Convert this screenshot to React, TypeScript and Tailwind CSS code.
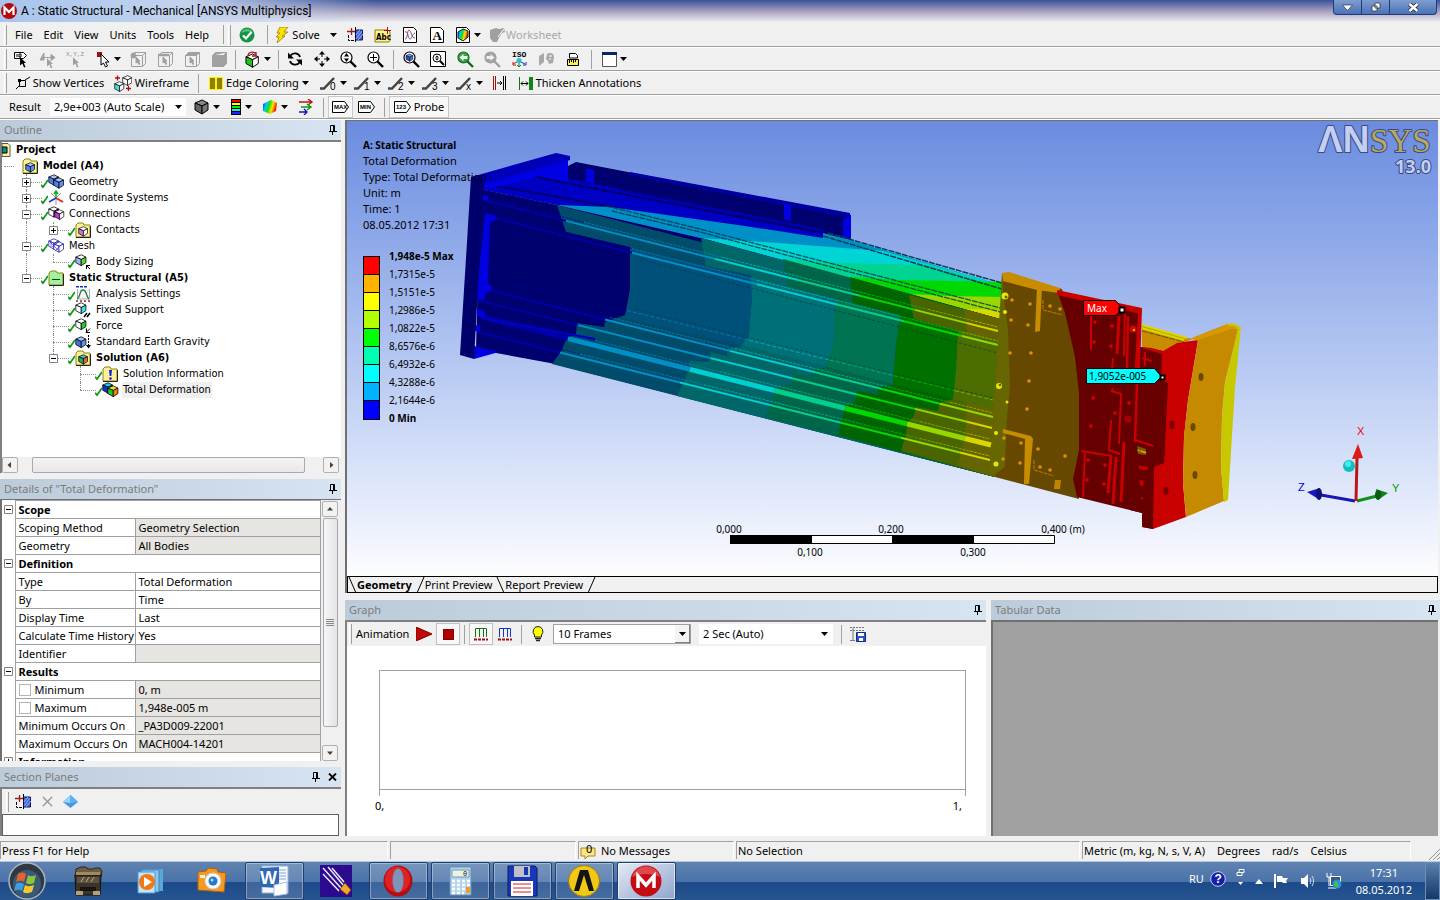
import type { ReactNode } from "react";
import { X } from "lucide-react";

type Kids = { children?: ReactNode };

/* ---------- small drawing helpers ---------- */

const Glyph = ({ children, w = 16, h = 16, box }: Kids & { w?: number; h?: number; box?: string }) => (
  <svg width={w} height={h} viewBox={box ?? `0 0 ${w} ${h}`} className="shrink-0" aria-hidden="true">
    {children}
  </svg>
);

const Caret = () => (
  <Glyph w={7} h={4}>
    <path d="M0 0h7L3.500 4z" fill="#000" />
  </Glyph>
);

const Cube = ({ top = "#fff", left = "#fff", right = "#fff", line = "#000", x = 0, y = 0, s = 1 }) => (
  <g transform={`translate(${x} ${y}) scale(${s})`} stroke={line} strokeLinejoin="round">
    <path d="M1 4l7-3 6 3-6 3z" fill={top} />
    <path d="M1 4l7 3v8l-7-4z" fill={left} />
    <path d="M8 7l6-3v7l-6 4z" fill={right} />
  </g>
);

const FolderShape = ({ fill = "#ffef9a" }) => (
  <g>
    <path d="M1 3l2-2h5l1 2h6v12H1z" fill={fill} stroke="#8c8400" />
    <path d="M1 15.500h14.500V4" stroke="#222" fill="none" />
  </g>
);

const Lens = ({ children, fill = "#fff", line = "#000" }: Kids & { fill?: string; line?: string }) => (
  <Glyph w={17} h={17}>
    <path d="M10 10l6 6" stroke={line} strokeWidth="2.400" />
    <circle cx="6.500" cy="6.500" r="5.500" fill={fill} stroke={line} strokeWidth="1.200" />
    {children}
  </Glyph>
);

const GhostCube = ({ kind }: { kind: number }) => (
  <Glyph w={17} h={17}>
    <g stroke="#a0a0a0" fill="none">
      <path d="M1.500 4.500l3-3h11v11l-3 3h-11zM1.500 4.500h11l3-3M12.500 4.500v11" fill={kind === 3 ? "#a0a0a0" : "#f0f0f0"} />
      {kind === 0 && <circle cx="3.500" cy="4.500" r="2.500" fill="#a0a0a0" />}
      {kind === 1 && <path d="M1 4h11" strokeWidth="2.500" />}
      {kind === 2 && <path d="M1.500 4.500l3-3h11l-3 3z" fill="#a0a0a0" />}
      {kind < 3 && <path d="M6 6l4 4-1.500.2 1.300 2.800-1 .5L7.500 11 6 12z" fill="#a0a0a0" />}
    </g>
  </Glyph>
);

const Pointer = ({ x = 0, y = 0, fill = "#000" }) => (
  <path d="M0 0l6 6H3.800l1.700 4-1.500.6-1.600-4L0 8.500z" fill={fill} transform={`translate(${x} ${y})`} />
);

const SectionIcon = () => (
  <Glyph w={17} h={16}>
    <path d="M8.500 3h7v10h-7z" fill="#3f62d8" stroke="#101050" />
    <path d="M9 12l6-8M9 8l4-5M11 13l5-6" stroke="#9cb4ff" />
    <path d="M1.500 8v5.500h7M8.500 0v16" stroke="#000" fill="none" strokeDasharray="3 1" />
    <path d="M0 4.500h8M4.500 1v7" stroke="#9c1c1c" strokeWidth="1.300" />
  </Glyph>
);

const TagIcon = ({ label }: { label: string }) => (
  <svg width="17" height="12" viewBox="0 0 17 12" className="shrink-0">
    <path d="M.5.5h12l4 5.500-4 5.500H.5z" fill="#fff" stroke="#000" />
    <text x="2" y="8" fontSize="6" fontWeight="700" fontFamily="'Liberation Sans',sans-serif">
      {label}
    </text>
  </svg>
);

const RainbowDefs = () => (
  <defs>
    <linearGradient id="rainbow" x1="0" x2="1" y1="0" y2=".3">
      <stop offset="0" stopColor="#0018ff" />
      <stop offset=".3" stopColor="#00c8ff" />
      <stop offset=".5" stopColor="#10e010" />
      <stop offset=".75" stopColor="#ffe000" />
      <stop offset="1" stopColor="#f01800" />
    </linearGradient>
  </defs>
);

/* ---------- tool bars ---------- */

const Grip = () => <span className="h-5 w-[3px] shrink-0 border-r border-[#a0a0a0] border-l border-l-white" />;

const Rule = ({ tight }: { tight?: boolean }) => (
  <span className={`h-[19px] w-px shrink-0 bg-[#a0a0a0] ${tight ? "mx-[2px]" : "mx-1"}`} />
);

const Tool = ({ label, children, className = "w-[27px]" }: Kids & { label: string; className?: string }) => (
  <button aria-label={label} className={`flex h-[22px] shrink-0 items-center justify-center gap-[3px] ${className}`}>
    {children}
  </button>
);

const ToolRow = ({ children, className = "h-6 pb-px" }: Kids & { className?: string }) => (
  <div className={`flex shrink-0 items-center overflow-hidden border-b border-white pl-1 shadow-[inset_0_-1px_0_#a0a0a0] ${className}`}>
    {children}
  </div>
);

const menus = ["File", "Edit", "View", "Units", "Tools", "Help"];

const MenuBar = () => (
  <ToolRow className="h-[26px]">
    <Grip />
    <nav className="flex gap-[11px] pr-[10px] pl-2">
      {menus.map((m) => (
        <button key={m}>{m}</button>
      ))}
    </nav>
    <Rule />
    <Grip />
    <Tool label="Status" className="w-8">
      <Glyph>
        <circle cx="8" cy="8" r="7.500" fill="#159447" />
        <path d="M2 6a6.500 6.500 0 0 1 12 0c-3-2-8-2-12 0z" fill="#54c17a" />
        <path d="M4 8.500l3 3L12.500 5" fill="none" stroke="#fff" strokeWidth="2.200" />
      </Glyph>
    </Tool>
    <Rule />
    <Tool label="Solve" className="w-[52px]">
      <Glyph w={13} h={16}>
        <path d="M4 0h8L8 5h4L6 9h3L1 16l2-6H0l4-4H1z" fill="#ffe000" stroke="#9a8400" strokeWidth=".8" />
      </Glyph>
      Solve
    </Tool>
    <Tool label="Solve options" className="w-[18px]">
      <Caret />
    </Tool>
    <Tool label="New section plane">
      <SectionIcon />
    </Tool>
    <Tool label="New comment">
      <Glyph w={17} h={16}>
        <path d="M1 3h13l2 2v9l-2 1H1z" fill="#fdf28a" stroke="#8a8000" />
        <text x="2" y="13" fontSize="8" fontWeight="700" fontFamily="'DejaVu Sans Condensed',sans-serif">Abc</text>
        <path d="M10 3.500h7M13.500 0v7" stroke="#a01010" />
      </Glyph>
    </Tool>
    <Tool label="New chart">
      <Glyph>
        <path d="M1.500.5h10l3 3v12h-13z" fill="#fff" stroke="#000" />
        <path d="M3 12c3 0 2-9 4-9s3 9 6 8" fill="none" stroke="#c03030" />
        <path d="M3 5c3-2 3 7 5 7s2-5 5-6" fill="none" stroke="#4060c0" />
      </Glyph>
    </Tool>
    <Tool label="New annotation">
      <Glyph>
        <path d="M1.500.5h10l3 3v12h-13z" fill="#fff" stroke="#000" />
        <text x="3.500" y="13" fontSize="13" fontWeight="700" fontFamily="'Liberation Serif',serif">A</text>
      </Glyph>
    </Tool>
    <Tool label="New image" className="w-9">
      <Glyph>
        <RainbowDefs />
        <path d="M1.500.5h10l3 3v12h-13z" fill="#fff" stroke="#000" />
        <path d="M3 5l5-3 5 2v6l-5 4-5-3z" fill="url(#rainbow)" stroke="#123" />
      </Glyph>
      <Caret />
    </Tool>
    <button disabled className="ml-[3px] flex items-center text-[#a8a8a8]">
      <Glyph w={17} h={16}>
        <path d="M1 3l6-2 3 1 5-1 1 4-3 1-3 5-2 4H4l-3-4z" fill="#a0a0a0" />
        <path d="M9 10l6-8" stroke="#fff" />
      </Glyph>
      Worksheet
    </button>
  </ToolRow>
);

const SelectionBar = () => (
  <ToolRow>
    <Grip />
    <Tool label="Label">
      <Glyph w={16} h={17}>
        <path d="M1.500 1.500h9l3 3-3 3h-9z" fill="#fff" stroke="#000" />
        <path d="M4 3v3M6 3h2v3H6z" stroke="#000" fill="none" />
        <Pointer x={7} y={6} />
      </Glyph>
    </Tool>
    <Tool label="Direction">
      <Glyph w={17} h={17}>
        <path d="M5 2L1 9h4zM5 6.500h10M12 3.500l4 3-4 3z" fill="#a0a0a0" stroke="#a0a0a0" />
        <Pointer x={8} y={7} fill="#a0a0a0" />
      </Glyph>
    </Tool>
    <Tool label="Coordinates">
      <Glyph w={20} h={17}>
        <text x="1" y="5" fontSize="6" fill="#909090" fontFamily="'Liberation Mono',monospace">X,Y,Z</text>
        <Pointer x={8} y={6} fill="#a0a0a0" />
      </Glyph>
    </Tool>
    <Tool label="Select mode" className="ml-1 w-[33px]">
      <Glyph w={15} h={17}>
        <path d="M1 1h5v5H1z" fill="#a01010" />
        <path d="M5 3l8 8h-3.500l2 4-2 1-2-4L5 14z" fill="#fff" stroke="#000" />
      </Glyph>
      <Caret />
    </Tool>
    {["Vertex", "Edge", "Face", "Body"].map((k, i) => (
      <Tool key={k} label={k}>
        <GhostCube kind={i} />
      </Tool>
    ))}
    <Rule tight />
    <Tool label="Extend selection" className="w-[38px]">
      <Glyph w={17} h={17}>
        <Cube x={1} y={2} s={0.95} left="#18c818" right="#fff" />
        <path d="M4 5c0-5 8-5 8-1M12 1v4H8" fill="none" stroke="#b01818" strokeWidth="1.300" />
      </Glyph>
      <Caret />
    </Tool>
    <Rule tight />
    <Tool label="Rotate">
      <Glyph>
        <path d="M13 6C12 2 6 1 3.500 4.500M3 10c1 4 7 5 9.500 1.500" fill="none" stroke="#000" strokeWidth="1.800" />
        <path d="M1 1.500v6h6zM15 14.500v-6H9z" fill="#000" />
      </Glyph>
    </Tool>
    <Tool label="Pan">
      <Glyph>
        <path d="M8 2v4M8 10v4M2 8h4M10 8h4" stroke="#000" />
        <path d="M8 0l3 3.500H5zM8 16l3-3.500H5zM0 8l3.500-3v6zM16 8l-3.500-3v6z" fill="#000" />
      </Glyph>
    </Tool>
    <Tool label="Zoom">
      <Lens>
        <path d="M6.500 2l2.500 3.500H4zM6.500 11L9 7.500H4z" />
      </Lens>
    </Tool>
    <Tool label="Box zoom">
      <Lens>
        <path d="M6.500 3v7M3 6.500h7" stroke="#000" />
      </Lens>
    </Tool>
    <Rule />
    <Tool label="Zoom to fit">
      <Lens>
        <Cube x={2.5} y={2.5} s={0.52} top="#6da0ff" left="#2a50c8" right="#3f70e8" />
      </Lens>
    </Tool>
    <Tool label="Magnifier window">
      <Glyph w={17} h={17}>
        <path d="M.5.5h15v15H.5z" fill="#fff" stroke="#000" />
        <circle cx="7" cy="7" r="4" fill="none" stroke="#000" />
        <path d="M10 10l4 4" stroke="#000" strokeWidth="2" />
        <path d="M7 4.500L9 6.500H5zM7 9.500L9 7.500H5z" />
      </Glyph>
    </Tool>
    <Tool label="Previous view">
      <Lens fill="#2fa83a" line="#15651d">
        <path d="M2.500 6.500l4-3.500v2h4v3h-4v2z" fill="#fff" />
      </Lens>
    </Tool>
    <Tool label="Next view">
      <Lens fill="#a0a0a0" line="#a0a0a0">
        <path d="M10.500 6.500l-4-3.500v2h-4v3h4v2z" fill="#eee" />
      </Lens>
    </Tool>
    <Tool label="Isometric view">
      <Glyph w={17} h={17}>
        <text x="1" y="6" fontSize="8" fontWeight="700" fontFamily="'Liberation Mono',monospace">ISO</text>
        <path d="M8 10l-6 3M2 11v3h3" stroke="#c01818" fill="none" />
        <path d="M8 10l6 3M15 11v3h-3" stroke="#1830c0" fill="none" />
        <path d="M8 11v4M6 14l2 2 2-2" stroke="#108020" fill="none" />
        <circle cx="8" cy="9.500" r="2.500" fill="#28c0d0" />
      </Glyph>
    </Tool>
    <Tool label="Look at">
      <Glyph w={17} h={16}>
        <path d="M1 5l5-3v9l-5 4zM9 3c3-2 7-1 7 3l-1 6-4 1-1-3-2-2z" fill="#a8a8a8" />
        <path d="M11 5h3M11 8h2" stroke="#fff" />
      </Glyph>
    </Tool>
    <Tool label="Rescale">
      <Glyph w={13} h={15}>
        <path d="M2.500 6V1.500h6l2 2V6z" fill="#fff" stroke="#000" />
        <path d="M.5 7.500h11v6H.5z" fill="#ffee50" stroke="#000" />
        <path d="M2.500 8v3M4.500 8v2M6.500 8v3M8.500 8v2" stroke="#000" />
      </Glyph>
    </Tool>
    <Rule />
    <Tool label="Viewports" className="w-9">
      <Glyph w={15} h={15}>
        <path d="M.5.5h14v14H.5z" fill="#fff" stroke="#555" />
        <path d="M0 0h15v3H0z" fill="#0a246a" />
      </Glyph>
      <Caret />
    </Tool>
  </ToolRow>
);

const EdgeBar = () => (
  <ToolRow>
    <Grip />
    <Tool label="Show Vertices" className="ml-[7px] w-[92px]">
      <Glyph w={14} h={14}>
        <path d="M3.500 4.500h6v6h-6zM9 4l5-3M3 10l-3 3" fill="none" stroke="#000" />
        <path d="M2 3h3v3H2z" />
      </Glyph>
      Show Vertices
    </Tool>
    <Tool label="Wireframe" className="ml-[7px] w-[77px]">
      <Glyph w={18} h={17}>
        <Cube x={8} y={0} s={0.7} />
        <Cube x={0} y={6} s={0.7} left="#40e0e0" />
        <path d="M1 3h5M3.500 .5v5M12 13.500h5M14.500 11v5" stroke="#b01010" fill="none" strokeWidth="1.300" />
      </Glyph>
      Wireframe
    </Tool>
    <span className="w-1" />
    <Rule />
    <Tool label="Edge Coloring" className="mr-[6px] ml-[5px] w-[102px]">
      <Glyph w={14} h={13}>
        <path d="M0 0h14v13H0z" fill="#fff200" />
        <path d="M1 1h5v11H1zM8 1h5v11H8z" fill="#8a8200" />
      </Glyph>
      Edge Coloring
      <Caret />
    </Tool>
    {["0", "1", "2", "3", "x"].map((n) => (
      <Tool key={n} label={`Edge thickness ${n}`} className="w-[34px]">
        <Glyph w={17} h={16}>
          <path d="M0 13.500h4L14 3" fill="none" stroke="#444" strokeWidth="2.500" />
          <text x="10" y="15" fontSize="10" fontFamily="'Liberation Sans',sans-serif">{n}</text>
        </Glyph>
        <Caret />
      </Tool>
    ))}
    <Tool label="Edge joints">
      <Glyph w={14} h={14}>
        <path d="M.5 0v14M2.500 0v14" stroke="#a01010" />
        <path d="M10.500 0v14M12.500 0v14M4 7h5M7 5l2 2-2 2" stroke="#000" fill="none" />
      </Glyph>
    </Tool>
    <Tool label="Thicken Annotations" className="ml-1 w-[126px]">
      <Glyph w={14} h={13}>
        <path d="M.5 0v13" stroke="#0a7a10" />
        <path d="M10 0h4v13h-4z" fill="#0a8a14" />
        <path d="M2 6.500h7M4 4.500l-2 2 2 2M7 4.500l2 2-2 2" stroke="#000" fill="none" />
      </Glyph>
      Thicken Annotations
    </Tool>
  </ToolRow>
);

const ResultBar = () => (
  <ToolRow>
    <label htmlFor="scale" className="w-[46px] pl-[5px]">
      Result
    </label>
    <span className="relative flex items-center">
      <select id="scale" className="h-[18px] w-[136px] appearance-none bg-white pl-1">
        <option>2,9e+003 (Auto Scale)</option>
      </select>
      <span className="pointer-events-none absolute right-1">
        <Caret />
      </span>
    </span>
    <Tool label="Geometry display" className="ml-1 w-[34px]">
      <Glyph>
        <Cube top="#888" left="#666" right="#777" />
      </Glyph>
      <Caret />
    </Tool>
    <Tool label="Contours" className="w-[34px]">
      <Glyph w={12} h={16}>
        <path d="M1 0h10v16H1z" />
        <path d="M2 1h8v2H2z" fill="#f00" />
        <path d="M2 4h8v2H2z" fill="#ff0" />
        <path d="M2 7h8v2H2z" fill="#0e0" />
        <path d="M2 10h8v2H2z" fill="#0ee" />
        <path d="M2 13h8v2H2z" fill="#22f" />
      </Glyph>
      <Caret />
    </Tool>
    <Tool label="Edges" className="w-[34px]">
      <Glyph>
        <path d="M1 5l8-4 6 3-1 8-6 3-7-3z" fill="url(#rainbow)" />
      </Glyph>
      <Caret />
    </Tool>
    <Tool label="Vectors">
      <Glyph>
        <path d="M1 3h12M10 0l4 3-4 3" stroke="#c01010" fill="none" strokeWidth="1.400" />
        <path d="M3 8h9M9 5l4 3-4 3" stroke="#0a9a10" fill="none" strokeWidth="1.400" />
        <path d="M1 13h7M6 10l3 3-3 3" stroke="#1010c0" fill="none" strokeWidth="1.400" />
      </Glyph>
    </Tool>
    <Rule />
    <Tool label="Maximum" className="w-[25px] border border-[#c8c8c8] bg-[#f8f8f8]">
      <TagIcon label="MAX" />
    </Tool>
    <Tool label="Minimum">
      <TagIcon label="MIN" />
    </Tool>
    <Rule />
    <Tool label="Probe" className="w-[60px] border border-[#c8c8c8] bg-[#f8f8f8]">
      <TagIcon label="123" />
      Probe
    </Tool>
  </ToolRow>
);

/* ---------- docked panels ---------- */

const Pin = () => (
  <Glyph w={8} h={10}>
    <path d="M1.500 6V.5h4V6M5 .5V6M0 6.500h8M3.500 7v3" stroke="#000" fill="none" />
    <path d="M4 1h2v5H4z" />
  </Glyph>
);

const PanelTitle = ({ title, closable }: { title: string; closable?: boolean }) => (
  <header className="flex h-5 shrink-0 items-center gap-2 bg-linear-to-r from-[#bccbda] to-[#d7e4f2] pr-1 pl-1 text-[#7c7c7c]">
    <h2 className="flex-1">{title}</h2>
    <button aria-label={`Auto hide ${title}`}>
      <Pin />
    </button>
    {closable && (
      <button aria-label={`Close ${title}`}>
        <Glyph w={9} h={8}>
          <path d="M1 .5l7 7M8 .5l-7 7" stroke="#000" strokeWidth="1.800" />
        </Glyph>
      </button>
    )}
  </header>
);

const Check = () => (
  <path d="M0 11l2 2 5-7" fill="none" stroke="#149a1c" strokeWidth="1.800" />
);

type IconKind =
  | "project" | "model" | "geometry" | "coords" | "connections" | "contacts" | "mesh" | "sizing" | "static"
  | "analysis" | "support" | "force" | "gravity" | "solution" | "info" | "total";

const nodeIcons: Record<IconKind, ReactNode> = {
  project: (
    <>
      <path d="M0 1.500h6l2 2v11H0z" fill="#ffef9a" stroke="#555" />
      <path d="M0 5h5v6H0z" fill="#0a8a8a" stroke="#000" />
    </>
  ),
  model: (
    <>
      <FolderShape />
      <Cube x={3} y={4} s={0.68} top="#a8c4ff" left="#5080e8" right="#6090f0" />
    </>
  ),
  geometry: (
    <>
      <Cube x={0} y={0} s={0.75} top="#a8c4ff" left="#5080e8" right="#6090f0" />
      <Cube x={5} y={3} s={0.75} top="#a8c4ff" left="#5080e8" right="#6090f0" />
    </>
  ),
  coords: (
    <>
      <path d="M8 8v7M3 3l5 5 5-5" stroke="#999" fill="none" />
      <path d="M8 8V2M6 4l2-3 2 3" stroke="#0ab020" strokeWidth="1.500" fill="none" />
      <path d="M8 8l-7 4" stroke="#2040e0" strokeWidth="2" />
      <path d="M8 8l7 4" stroke="#e02020" strokeWidth="2" />
    </>
  ),
  connections: (
    <>
      <Cube x={0} y={0} s={0.75} right="#c030e0" />
      <Cube x={6} y={3} s={0.7} left="#c030e0" />
    </>
  ),
  contacts: (
    <>
      <FolderShape />
      <Cube x={3} y={4} s={0.68} left="#d070e0" right="#fff" />
    </>
  ),
  mesh: (
    <>
      <Cube x={0} y={0} s={0.75} line="#1818a0" />
      <Cube x={5} y={3} s={0.75} line="#1818a0" />
      <path d="M2 4l8 8M4 9l8-6M7 13l6-6M3 3v6" stroke="#2020d0" strokeWidth=".6" />
    </>
  ),
  sizing: (
    <>
      <Cube x={0} y={0} s={0.78} left="#a0b8f0" right="#50e030" />
      <path d="M11 11.500h4M11.500 11v4M11 11l4 4" stroke="#000" />
    </>
  ),
  static: (
    <>
      <FolderShape fill="#a4f0a0" />
      <path d="M4 9.500h8" stroke="#104010" />
    </>
  ),
  analysis: (
    <>
      <path d="M2.500 3v10h12V3" fill="#f4f4f4" stroke="#aaa" />
      <path d="M2 13c4-2 2-9 6-9s3 7 6 9" fill="none" stroke="#188050" strokeWidth="1.300" />
      <path d="M1 .7h12" stroke="#2030c0" strokeWidth="1.500" strokeDasharray="3 1" />
      <path d="M1 15h14" stroke="#b01818" strokeWidth="1.500" strokeDasharray="2 2" />
    </>
  ),
  support: (
    <>
      <Cube x={0} y={0} s={0.78} right="#40e0f0" />
      <path d="M9 15l3-4M12 15l3-4" stroke="#000" strokeWidth="1.500" />
    </>
  ),
  force: (
    <>
      <Cube x={0} y={0} s={0.78} right="#20d020" />
      <path d="M11 14.500h4M11.500 14.500v-4M11 14.500l4-4" stroke="#000" />
    </>
  ),
  gravity: (
    <>
      <Cube x={0} y={2} s={0.78} top="#a8c4ff" left="#4a70d8" right="#6090f0" />
      <path d="M13.500 1v12" stroke="#000" strokeDasharray="2 1" />
      <path d="M11 11h5l-2.500 3.500z" />
    </>
  ),
  solution: (
    <>
      <FolderShape />
      <Cube x={3} y={4} s={0.68} top="#30c0f0" left="#18b050" right="#f06020" />
    </>
  ),
  info: (
    <>
      <FolderShape />
      <path d="M7 4h3l-.7 6H7.700z" fill="#1020d0" />
      <circle cx="8.500" cy="12.500" r="1.300" fill="#1020d0" />
    </>
  ),
  total: (
    <>
      <Cube x={0} y={0} s={0.75} top="#20c0f0" left="#1030e0" right="#18c040" />
      <Cube x={5} y={3} s={0.78} top="#f0e020" left="#20c830" right="#f08010" />
    </>
  ),
};

type TreeNode = {
  label: string;
  icon: IconKind;
  depth: number;
  box?: "+" | "-";
  bold?: boolean;
  picked?: boolean;
  last?: boolean;
  rail?: boolean;
};

const tree: TreeNode[] = [
  { label: "Model (A4)", icon: "model", depth: 0, bold: true },
  { label: "Geometry", icon: "geometry", depth: 1, box: "+" },
  { label: "Coordinate Systems", icon: "coords", depth: 1, box: "+" },
  { label: "Connections", icon: "connections", depth: 1, box: "-" },
  { label: "Contacts", icon: "contacts", depth: 2, box: "+", rail: true, last: true },
  { label: "Mesh", icon: "mesh", depth: 1, box: "-" },
  { label: "Body Sizing", icon: "sizing", depth: 2, rail: true, last: true },
  { label: "Static Structural (A5)", icon: "static", depth: 1, box: "-", bold: true, last: true },
  { label: "Analysis Settings", icon: "analysis", depth: 2 },
  { label: "Fixed Support", icon: "support", depth: 2 },
  { label: "Force", icon: "force", depth: 2 },
  { label: "Standard Earth Gravity", icon: "gravity", depth: 2 },
  { label: "Solution (A6)", icon: "solution", depth: 2, box: "-", bold: true, last: true },
  { label: "Solution Information", icon: "info", depth: 3 },
  { label: "Total Deformation", icon: "total", depth: 3, picked: true, last: true },
];

const Expander = ({ sign }: { sign: "+" | "-" }) => (
  <Glyph w={9} h={9}>
    <path d="M.5.5h8v8h-8z" fill="#fff" stroke="#848484" />
    <path d={sign === "+" ? "M2 4.500h5M4.500 2v5" : "M2 4.500h5"} stroke="#000" />
  </Glyph>
);

const TreeRow = ({ node }: { node: TreeNode }) => (
  <li className="flex h-4 items-center">
    {/* guide lines of the ancestors */}
    {Array.from({ length: Math.max(node.depth - 1, 0) }, (_, i) => (
      <span key={i} className="flex h-4 w-[27px] shrink-0 pl-6">
        {node.rail && i === 0 && <span className="border-l border-dotted border-[#909090]" />}
      </span>
    ))}
    {node.depth > 0 ? (
      <span className="relative ml-5 flex h-4 w-[19px] shrink-0 items-center">
        <span className={`absolute top-0 left-1 border-l border-dotted border-[#909090] ${node.last ? "h-2" : "h-4"}`} />
        <span className="absolute left-1 w-4 border-t border-dotted border-[#909090]" />
        {node.box && (
          <button className="relative" aria-label={`Toggle ${node.label}`}>
            <Expander sign={node.box} />
          </button>
        )}
      </span>
    ) : (
      <span className="mr-2 ml-[2px] w-[10px] border-t border-dotted border-[#909090]" />
    )}
    {node.depth > 0 && (
      <Glyph w={7} h={16}>
        <Check />
      </Glyph>
    )}
    <Glyph w={17} h={16}>{nodeIcons[node.icon]}</Glyph>
    <span className={`ml-[3px] px-[1px] whitespace-nowrap ${node.bold ? "font-bold" : ""} ${node.picked ? "bg-[#f0f0f0]" : ""}`}>
      {node.label}
    </span>
  </li>
);

const ScrollButton = ({ d, label }: { d: string; label: string }) => (
  <button aria-label={label} className="flex size-4 shrink-0 items-center justify-center rounded-xs border border-[#b0b0b0] bg-[#f2f2f2]">
    <Glyph w={8} h={8}>
      <path d={d} fill="#404040" />
    </Glyph>
  </button>
);

const Outline = () => (
  <section className="flex min-h-0 flex-1 flex-col">
    <PanelTitle title="Outline" />
    <div className="flex min-h-0 flex-1 flex-col border-t-2 border-l-2 border-[#808080] bg-white">
      <ul className="min-h-0 flex-1 overflow-hidden font-['DejaVu_Sans_Condensed','DejaVu_Sans',sans-serif]">
        <li className="flex h-4 items-center gap-[5px] font-bold">
          <Glyph w={9} h={16}>{nodeIcons.project}</Glyph>
          Project
        </li>
        {tree.map((n) => (
          <TreeRow key={n.label} node={n} />
        ))}
      </ul>
      <div className="flex h-4 items-center gap-[14px] bg-[#f0f0f0] pr-[2px]">
        <ScrollButton label="Scroll left" d="M5 1v6L1.500 4z" />
        <div className="flex flex-1 pr-1">
          <span className="h-4 flex-1 rounded-xs border border-[#a8a8b0] bg-linear-to-b from-[#f4f4f4] to-[#e8e8e8]" />
        </div>
        <ScrollButton label="Scroll right" d="M3 1v6l3.500-3z" />
      </div>
    </div>
  </section>
);

type Detail = { group?: string; name?: string; value?: string; locked?: boolean; tick?: boolean };

const details: Detail[] = [
  { group: "Scope" },
  { name: "Scoping Method", value: "Geometry Selection", locked: true },
  { name: "Geometry", value: "All Bodies", locked: true },
  { group: "Definition" },
  { name: "Type", value: "Total Deformation" },
  { name: "By", value: "Time" },
  { name: "Display Time", value: "Last" },
  { name: "Calculate Time History", value: "Yes" },
  { name: "Identifier", value: "", locked: true },
  { group: "Results" },
  { name: "Minimum", value: "0, m", locked: true, tick: true },
  { name: "Maximum", value: "1,948e-005 m", locked: true, tick: true },
  { name: "Minimum Occurs On", value: "_PA3D009-22001", locked: true },
  { name: "Maximum Occurs On", value: "MACH004-14201", locked: true },
  { group: "Information" },
];

const Details = () => (
  <section className="mt-[6px] flex shrink-0 flex-col">
    <PanelTitle title={'Details of "Total Deformation"'} />
    <div className="flex h-[262px] overflow-hidden border-t border-l-2 border-[#707070] bg-white">
      <div className="flex-1 overflow-hidden">
        <table className="w-full table-fixed border-collapse">
          <colgroup>
            <col className="w-[13px]" />
            <col className="w-[120px]" />
            <col />
          </colgroup>
          <tbody>
            {details.map((d) =>
              d.group ? (
                <tr key={d.group} className="h-[18px]">
                  <td className="pl-[2px]">
                    <button aria-label={`Toggle ${d.group}`} className="flex">
                      <Expander sign={d.group === "Information" ? "+" : "-"} />
                    </button>
                  </td>
                  <th colSpan={2} className="border border-[#a0a0a0] pl-[3px] text-left leading-4 font-bold">
                    {d.group}
                  </th>
                </tr>
              ) : (
                <tr key={d.name} className="h-[18px] whitespace-nowrap">
                  <td />
                  <td className="border border-[#a0a0a0] pl-[3px] leading-4">
                    {d.tick ? (
                      <label className="flex items-center gap-1">
                        <input type="checkbox" className="size-3 appearance-none border border-[#b4b4b4] bg-white" />
                        {d.name}
                      </label>
                    ) : (
                      d.name
                    )}
                  </td>
                  <td className={`border border-[#a0a0a0] pl-[3px] leading-4 ${d.locked ? "bg-[#e6e5e1]" : ""}`}>{d.value}</td>
                </tr>
              ),
            )}
          </tbody>
        </table>
      </div>
      <div className="flex w-5 flex-col items-center bg-[#f0f0f0] pt-px pr-[2px]">
        <ScrollButton label="Scroll up" d="M1 5.500h6L4 2z" />
        <span className="mt-px flex h-[209px] w-[15px] flex-col items-center justify-center gap-px rounded-xs border border-[#a8a8b0] bg-linear-to-r from-[#f6f6f6] to-[#e4e4e8]">
          {[0, 1, 2, 3].map((i) => (
            <span key={i} className="h-px w-2 bg-[#888]" />
          ))}
        </span>
        <span className="flex-1" />
        <ScrollButton label="Scroll down" d="M1 2.500h6L4 6z" />
      </div>
    </div>
  </section>
);

const SectionPlanes = () => (
  <section className="mt-[6px] flex shrink-0 flex-col">
    <PanelTitle title="Section Planes" closable />
    <div className="border-t-2 border-l-2 border-[#808080]">
      <div className="flex h-[25px] items-center pl-1">
        <Grip />
        <Tool label="New plane" className="ml-px w-[27px]">
          <SectionIcon />
        </Tool>
        <Tool label="Delete plane" className="w-5">
          <X size={17} strokeWidth={2} color="#999" />
        </Tool>
        <Tool label="Show whole elements">
          <Glyph w={15} h={13}>
            <path d="M7.500 0L15 7l-7.500 6L0 7z" fill="#3f9be8" />
            <path d="M7.500 0v8L0 7z" fill="#9cd0ff" />
            <path d="M7.500 0v8L15 7z" fill="#5cb0f4" />
          </Glyph>
        </Tool>
      </div>
      <div className="mr-[2px] h-[22px] border border-[#606060] bg-white" />
    </div>
  </section>
);

/* ---------- result model ---------- */

const litColors = ["#0000a8", "#0090c8", "#00d0d0", "#00d08c", "#00d800", "#94d800", "#d8d800"];

// Upper lips, main panel and lower lips of every isoband on the shaded side
const sideBands = [
  { fill: "#004c6a", pts: "557,205 566,232 630,247 630,290 625,315 605,322 604,327 577,323 576,334 566,339 562,350 552,364" },
  { fill: "#006668", pts: "701,238 706,266 751,275 752,300 749,335 740,347 728,348 727,356 711,352 709,362 690,361 686,377 677,396" },
  { fill: "#00664a", pts: "783,259 788,288 835,300 834,340 831,352 825,368 811,368 811,377 792,373 792,383 776,388 772,400 765,417" },
  { fill: "#006400", pts: "850,277 853,303 900,316 896,350 894,385 878,387 878,395 857,391 855,402 845,407 842,420 838,435" },
  { fill: "#4a6400", pts: "909,295 914,320 958,333 956,370 953,399 939,403 938,411 915,407 914,416 908,422 906,434 901,451" },
  { fill: "#646400", pts: "964,309 967,334 967,409 966,424 964,440 958,466" },
];

const panelBands = [
  { fill: "#00507a", pts: "630,248 630,290 625,318 742,346 749,335 752,300 751,277" },
  { fill: "#007078", pts: "751,277 752,300 749,335 742,345 825,366 831,352 834,340 835,299" },
  { fill: "#007452", pts: "835,299 834,340 831,352 825,366 893,384 895,350 900,315" },
  { fill: "#007000", pts: "900,315 896,350 893,384 953,399 956,370 958,331" },
  { fill: "#4c6e00", pts: "958,331 956,370 953,399 993,409 998,341" },
];

const topBands = [
  { fill: "#0090c8", pts: "557,205 610,207 745,226 823,238 823,233 850,240 1002,285 1000,319 705,239" },
  { fill: "#00d4d4", pts: "701,238 765,242 883,251 1002,285 1000,319" },
  { fill: "#00d490", pts: "783,259 840,263 927,265 1002,287 1000,319" },
  { fill: "#00d800", pts: "850,277 897,280 1002,282 1002,319" },
  { fill: "#98d800", pts: "909,294 950,296 1001,297 1001,319" },
  { fill: "#d8d800", pts: "964,309 985,309 1001,311 1000,320" },
];

type RailLine = { from: [number, number]; to: [number, number]; w: number; cuts: number[]; dash?: string };

const railLines: RailLine[] = [
  { from: [484, 200], to: [998, 331], w: 2, cuts: [566, 715, 798, 860, 915, 967] },
  { from: [484, 197], to: [998, 327], w: 1, cuts: [584, 722, 805, 868, 928, 975], dash: "3 1" },
  { from: [490, 217], to: [998, 345], w: 2, cuts: [632, 757, 837, 904, 962] },
  { from: [490, 213], to: [998, 341], w: 1, cuts: [632, 757, 837, 904, 962], dash: "3 1" },
  { from: [490, 277], to: [993, 400], w: 1, cuts: [627, 749, 830, 894, 955], dash: "4 2" },
  { from: [488, 287], to: [993, 413], w: 1, cuts: [610, 735, 822, 890, 950], dash: "3 1" },
  { from: [488, 290], to: [993, 417], w: 2, cuts: [605, 730, 815, 882, 940] },
  { from: [477, 300], to: [992, 428], w: 2, cuts: [578, 711, 792, 857, 915, 967] },
  { from: [480, 312], to: [990, 439], w: 1, cuts: [595, 720, 800, 860, 920, 970], dash: "3 1" },
  { from: [482, 317], to: [991, 445], w: 5, cuts: [568, 690, 775, 845, 907, 965] },
  { from: [480, 329], to: [990, 456], w: 1, cuts: [580, 704, 790, 860, 920, 970], dash: "3 1" },
  { from: [478, 332], to: [990, 460], w: 2, cuts: [560, 680, 770, 840, 901, 960] },
];

const Rail = ({ from, to, w, cuts, dash }: RailLine) => {
  const xs = [from[0], ...cuts, to[0]];
  const at = (x: number) => from[1] + ((x - from[0]) * (to[1] - from[1])) / (to[0] - from[0]);
  return (
    <g strokeWidth={w} strokeDasharray={dash} opacity={dash ? 0.6 : 1}>
      {xs.slice(1).map((x, i) => (
        <line key={x} x1={xs[i]} y1={at(xs[i])} x2={x} y2={at(x)} stroke={litColors[i]} />
      ))}
    </g>
  );
};

const Beam = () => (
  <g>
    {/* rear rail */}
    <path d="M568 166l8-4 275 53v25l-283-56z" fill="#00006e" />
    <path d="M630 172l220 41v5l-222-43z" fill="#0000a0" />
    <path d="M784 203l7 2v16l-7-2zM843 219l8-4v24l-8-2zM586 168l8 2v14l-8-2z" fill="#0000e0" />
    {/* top face */}
    <path d="M484 188l46-14 44 6 251 50v9l-80-12-188-22-73-15z" fill="#0000c4" />
    <path d="M530 176l298 58M495 186l70 12 130 26" stroke="#000060" strokeWidth="2" strokeDasharray="7 1" fill="none" />
    <path d="M620 190l205 42" stroke="#000090" />
    {topBands.map((b) => (
      <polygon key={b.fill} points={b.pts} fill={b.fill} />
    ))}
    <path d="M612 211l88 21 300 80M606 206l94 23 300 79" stroke="#003848" strokeWidth="1.300" fill="none" strokeDasharray="6 1" opacity=".8" />
    <path d="M823 236l179 53M828 233l174 50" stroke="#004458" strokeWidth="1.500" fill="none" strokeDasharray="6 1" />
    {/* shaded side */}
    <path d="M480 189l77 16 148 34 295 80-5 158-445-114-54-10-20-2z" fill="#00006e" />
    {sideBands.map((b) => (
      <polygon key={b.fill} points={`${b.pts} 995,477 1000,319`} fill={b.fill} />
    ))}
    {panelBands.map((b) => (
      <polygon key={b.fill} points={b.pts} fill={b.fill} />
    ))}
    <path d="M640 259l358 94M635 309l358 89" stroke="#003c3c" strokeDasharray="3 2" opacity=".6" />
    {railLines.map((r, i) => (
      <Rail key={i} {...r} />
    ))}
    {/* near end plate */}
    <path d="M471 177l85-24 14 3v4l-86 30z" fill="#0000b8" />
    <path d="M484 184l84-24v22l-28-6-56 14z" fill="#0000e4" />
    <path d="M485 213l11 3-1 5-5 1-2 62 4 2-1 5-5 2-2 7-8-1z" fill="#0000e0" />
    <path d="M483 195l5 1v5l-5-1zM477 309l8 2v7l-8-2zM475 325l5 1v6l-5-1z" fill="#0000e0" />
    <path d="M474 346l25 6-25 7z" fill="#0000e0" />
    <path d="M471 177l13 3-10 179-14-4z" fill="#00006c" />
    <path d="M482 318l113 21" stroke="#0000c8" strokeWidth="2" />
  </g>
);

const holes = [
  [1012, 300], [1030, 304], [1011, 320], [1028, 325], [1010, 353], [1031, 353], [1029, 381], [1027, 409],
  [1050, 306], [1060, 309], [1004, 438], [1021, 443], [1003, 459], [1020, 463], [1038, 449], [1040, 467], [1050, 470], [1065, 456],
];

const redHoles = [
  [1095, 322], [1112, 326], [1094, 342], [1111, 346], [1093, 398], [1129, 403], [1091, 426], [1115, 413],
  [1088, 460], [1105, 465], [1087, 480], [1104, 484],
];

const FrontPlate = () => (
  <g>
    {/* far end block */}
    <path d="M1142 325l46 13 5 1-30 12-21 2z" fill="#c88c00" />
    <path d="M1142 325l45 13M1142 328l42 12" stroke="#d8d800" strokeWidth="2" />
    <path d="M1142 331l42 11" stroke="#665c00" strokeDasharray="6 1" />
    <path d="M1130 345l33 6 6 32-3 82-11 4-2 60-11-2v-14l-12-3z" fill="#660000" />
    <path d="M1142 347l10 1 11 3 14-8 21-3-10 60-4 37-1 46 3 34-33 12-1-61 12-5 4-80-7-3 1-26-20-6z" fill="#c80000" />
    <path d="M1198 341l-6-3 35-14 12 2-14 56-3 34-1 50 3 35-38 16-3-34 1-46 4-37z" fill="#c68a00" />
    <path d="M1222 326l10-3 9 4-6 60-7 113-4 2-3-35 1-50 3-34 13-54z" fill="#c8c800" />
    <path d="M1190 339l36-14 12 2-40 13z" fill="#d89800" />
    {[[1201, 377], [1193, 427], [1195, 475]].map(([x, y]) => (
      <ellipse key={y} cx={x} cy={y} rx="2.500" ry="4" fill="#6a4a00" />
    ))}
    {[[1172, 425], [1166, 491]].map(([x, y]) => (
      <ellipse key={y} cx={x} cy={y} rx="2.500" ry="4" fill="#780000" />
    ))}
    <path d="M1142 358l10 2v6h-10zM1138 384l27 2v70l-30-6z" fill="#680000" />
    <path d="M1126 442l26 7 2 20-30-2z" fill="#660000" />
    <path d="M1126 442l20 7v6l-22-3z" fill="#7c5400" />
    <path d="M1127 447l20 6" stroke="#d8b000" strokeWidth="1.500" strokeDasharray="6 1" />
    <path d="M1124 463l24 4v4l-24-5zM1124 476l20 5v5l-20-4zM1124 492l20 6v2l-20-5z" fill="#c80000" />

    {/* plate */}
    <path d="M1002 273l60 16 17 80v130l-84-22z" fill="#664800" />
    <path d="M1002 275l2 25 4 30 2 55-4 45-1 37-11 8-4-3 4-60 5-90z" fill="#686600" />
    <path d="M1057 291l84 18-2 60-3 60 6 84-65-16-4-18 6-29v-57l-4-36-10-44z" fill="#660000" />
    <path d="M1002 273l7-1 51 16-1 5-22-3-34-9z" fill="#c88c00" />
    <path d="M1057 290l85 18-1 6-84-19z" fill="#c80000" />
    <path d="M1138 311l4-3-2 60-2 14h-4z" fill="#c80000" />
    <path d="M1037 287h5l-2 44-5 1z" fill="#c88c00" />
    <path d="M1003 429l28 7 2 3-4 45h-5l1-45-22-6z" fill="#c88c00" />
    <path d="M1043 300v10l20 5M1034 460v10l20 6" fill="none" stroke="#b88000" strokeDasharray="4 1" />
    <path d="M1055 480h6l-1 9h-6z" fill="#c08400" />
    {holes.map(([x, y]) => (
      <circle key={`${x}-${y}`} cx={x} cy={y} r="1.800" fill="#e09000" />
    ))}
    {[[1005, 296, 3.5], [1005, 312, 2], [999, 386, 3], [1007, 402, 1.5], [996, 433, 2], [996, 464, 2.5]].map(([x, y, r]) => (
      <circle key={y} cx={x} cy={y} r={r} fill="#e8e800" />
    ))}
    <circle cx="1006" cy="297" r="1.500" fill="#507000" />
    <circle cx="1000" cy="385" r="1.300" fill="#686600" />

    {/* machined details on the red half */}
    <g fill="none" stroke="#c80000">
      <path d="M1091 316v34" strokeWidth="2" />
      <path d="M1119 316l-2 38" strokeWidth="3" />
      <path d="M1125 310l-1 46M1113 388l-1 3 9 3-2 50M1113 358l-1 12" strokeWidth="2" />
      <path d="M1128 316l-1 52M1137 384l-2 58" strokeWidth="2.500" />
      <path d="M1111 420l-2 30 11 4" strokeWidth="2" />
      <path d="M1081 451l31 5M1085 452l-2 45" strokeWidth="2" />
      <path d="M1111 456l-3 37M1116 457l-3 47M1124 442l-3 60" strokeWidth="3" />
      <path d="M1145 352v14M1142 358l10 3M1135 440l18 6" strokeWidth="2" />
    </g>
    {redHoles.map(([x, y]) => (
      <circle key={`${x}-${y}`} cx={x} cy={y} r="1.800" fill="#d80000" />
    ))}
    <circle cx="1133" cy="329" r="3.500" fill="#d80000" />
    <circle cx="1134" cy="330" r="1.200" fill="#e0c000" />
    <circle cx="1128" cy="419" r="3.500" fill="#a80000" />
    <path d="M1144 470l10-2-1 61-11-2z" fill="#660000" />
  </g>
);

const Triad = () => (
  <g fontFamily="'Liberation Sans',sans-serif" fontSize="11">
    <path d="M1355 501l-34-6" stroke="#1818b0" strokeWidth="3" />
    <path d="M1307 492l13-4v12z" fill="#1818c0" />
    <ellipse cx="1319" cy="494" rx="3" ry="6" fill="#101078" />
    <path d="M1357 501l24-6" stroke="#109020" strokeWidth="3" />
    <path d="M1388 493l-12-4 2 11z" fill="#108018" />
    <ellipse cx="1378" cy="495" rx="3" ry="5" fill="#0a5a10" />
    <circle cx="1349" cy="466" r="6" fill="#10c0c0" />
    <circle cx="1348" cy="464" r="3" fill="#50e8e8" />
    <path d="M1356 501l1-43" stroke="#b81818" strokeWidth="3" />
    <path d="M1358 444l5 14-11 1z" fill="#e01818" />
    <text x="1357" y="435" fill="#f00000">X</text>
    <text x="1298" y="491" fill="#0000e0">Z</text>
    <text x="1392" y="492" fill="#00a000">Y</text>
  </g>
);

const Ruler = () => (
  <g fontFamily="'Noto Sans',sans-serif" fontSize="10" textAnchor="middle">
    <path d="M730.500 535.500h324v8h-324z" fill="#fff" stroke="#000" />
    <path d="M730 535h82v9h-82zM892 535h82v9h-82z" />
    <text x="729" y="533">0,000</text>
    <text x="891" y="533">0,200</text>
    <text x="1063" y="533">0,400 (m)</text>
    <text x="810" y="556">0,100</text>
    <text x="973" y="556">0,300</text>
  </g>
);

const Flags = () => (
  <g fontFamily="'Noto Sans',sans-serif">
    <path d="M1083.500 300.500h32l7 8-7 7h-32z" fill="#f00" stroke="#000" />
    <path d="M1119.500 307.500h5v5h-5z" fill="#fff" stroke="#000" strokeWidth="2" />
    <text x="1087" y="312" fill="#fff" fontSize="10">Max</text>
    <path d="M1086.500 368.500h68l7 8-7 7h-68z" fill="#0ff" stroke="#000" />
    <path d="M1160.500 375.500h4v4h-4z" fill="#fff" stroke="#000" strokeWidth="2" />
    <text x="1089" y="380" fontSize="10">1,9052e-005</text>
  </g>
);

const legend = [
  ["#ff0000", "1,948e-5 Max"],
  ["#ffb200", "1,7315e-5"],
  ["#ffff00", "1,5151e-5"],
  ["#b2ff00", "1,2986e-5"],
  ["#00ff00", "1,0822e-5"],
  ["#00ffb2", "8,6576e-6"],
  ["#00ffff", "6,4932e-6"],
  ["#00b2ff", "4,3288e-6"],
  ["#0000ff", "2,1644e-6"],
];

const Viewport = () => (
  <div className="relative min-h-0 flex-1 overflow-hidden bg-linear-to-b from-[#6a8bdf] to-[#fdfdff]">
    <svg viewBox="347 121 1091 455" preserveAspectRatio="xMinYMin meet" className="absolute inset-0 size-full">
      <Beam />
      <FrontPlate />
      <Flags />
      <Ruler />
      <Triad />
    </svg>
    <div className="absolute top-4 left-4 leading-4">
      <p className="text-[10px] leading-4 font-bold">A: Static Structural</p>
      <p>Total Deformation</p>
      <p>Type: Total Deformation</p>
      <p>Unit: m</p>
      <p>Time: 1</p>
      <p>08.05.2012 17:31</p>
    </div>
    <div className="absolute top-[135px] left-4 flex items-start gap-[9px] text-[10px]">
      <div className="flex w-[17px] flex-col border border-black">
        {legend.map(([color]) => (
          <span key={color} className="h-[18px] border-b border-black last:border-b-0" style={{ background: color }} />
        ))}
      </div>
      <ul className="-mt-[9px] leading-[18px]">
        {legend.map(([, text], i) => (
          <li key={text} className={i === 0 ? "font-bold" : ""}>{text}</li>
        ))}
        <li className="font-bold">0 Min</li>
      </ul>
    </div>
    <div className="absolute top-0 right-1 text-right">
      <svg width="118" height="58" viewBox="0 0 118 58" strokeLinejoin="round">
        <g stroke="#3a4a80" strokeWidth="2" paintOrder="stroke">
          <text x="2" y="31" fontSize="37" fontWeight="700" fill="#c3cff2" fontFamily="'Liberation Sans',sans-serif">ΛN</text>
          <text x="54" y="31" fontSize="33" fill="#b8a860" fontFamily="'Liberation Serif',serif">SYS</text>
          <text x="115" y="52" fontSize="18" fontWeight="700" fill="#c3cff2" textAnchor="end" fontFamily="'Noto Sans',sans-serif">13.0</text>
        </g>
      </svg>
    </div>
  </div>
);

const Slash = ({ flip }: { flip?: boolean }) => (
  <Glyph w={9} h={16}>
    <path d={flip ? "M1 0l7 16" : "M8 0L1 16"} stroke="#000" fill="none" />
  </Glyph>
);

const ViewTabs = () => (
  <div className="flex h-[17px] shrink-0 items-center border border-black bg-[#f0f0f0]">
    <Slash flip />
    <button className="pr-1 font-bold">Geometry</button>
    <Slash />
    <button className="pr-1">Print Preview</button>
    <Slash flip />
    <button className="pr-1">Report Preview</button>
    <Slash />
  </div>
);

/* ---------- graph and table ---------- */

const Combo = ({ id, label, value, className, boxed }: { id: string; label: string; value: string; className: string; boxed?: boolean }) => (
  <span className="relative flex items-center">
    <select id={id} aria-label={label} className={`h-5 appearance-none bg-white pl-1 ${className}`}>
      <option>{value}</option>
    </select>
    <span
      className={`pointer-events-none absolute right-px flex h-[18px] w-[15px] items-center justify-center ${
        boxed ? "border-r border-b border-[#808080] bg-[#f4f4f4]" : ""
      }`}
    >
      <Caret />
    </span>
  </span>
);

const FrameIcon = ({ color }: { color: string }) => (
  <Glyph w={15} h={14}>
    <path d="M1.500 10V1.500h11V10M5.500 1v9M9.500 1v9" fill="none" stroke={color} />
    <path d="M0 12.500h14" stroke="#a01010" strokeWidth="2" strokeDasharray="3 1" />
  </Glyph>
);

const Graph = () => (
  <section className="flex w-[641px] shrink-0 flex-col">
    <PanelTitle title="Graph" />
    <div className="flex flex-1 flex-col border-t-2 border-l-2 border-[#808080] bg-white">
      <div className="flex h-6 items-center bg-[#f0f0f0] pl-[2px]">
        <Grip />
        <span className="ml-1 w-[56px]">Animation</span>
        <Tool label="Play" className="w-6">
          <Glyph w={16} h={14}>
            <path d="M0 0l16 7-16 7z" fill="#c00808" stroke="#800" />
          </Glyph>
        </Tool>
        <Tool label="Stop" className="w-6 border border-[#c0c0c0] bg-[#f8f8f8]">
          <span className="size-[11px] border border-[#800] bg-[#b00000]" />
        </Tool>
        <Rule />
        <Tool label="Distributed" className="w-6 border border-[#c0c0c0] bg-[#f8f8f8]">
          <FrameIcon color="#0a7a10" />
        </Tool>
        <Tool label="Result sets" className="w-6">
          <FrameIcon color="#1038c0" />
        </Tool>
        <Rule />
        <Tool label="Hint" className="mr-[3px] w-6">
          <Glyph w={12} h={16}>
            <path d="M6 .5a5 5 0 0 1 3.500 8.500v2h-7V9A5 5 0 0 1 6 .5z" fill="#ffff00" stroke="#222" />
            <path d="M3 12.500h6M4 14.500h4" stroke="#222" strokeWidth="1.500" />
          </Glyph>
        </Tool>
        <Combo id="frames" label="Frames" value="10 Frames" className="w-[138px] border border-[#a0a0a0]" boxed />
        <span className="w-2" />
        <Combo id="seconds" label="Duration" value="2 Sec (Auto)" className="w-[134px]" />
        <span className="w-1" />
        <Rule />
        <Tool label="Export video" className="w-6">
          <Glyph w={17} h={16}>
            <path d="M0 1.500h15M0 4.500h15" stroke="#777" strokeDasharray="2 1" />
            <path d="M3 2v13M0 14.500h5" stroke="#777" />
            <path d="M6.500 6.500h9v9h-9z" fill="#2a56c8" stroke="#102a80" />
            <path d="M8 7h6v3H8zM9 12h4v3H9z" fill="#fff" />
          </Glyph>
        </Tool>
      </div>
      <div className="flex flex-1 flex-col px-5 pt-6 pb-5">
        <div className="ml-3 flex-1 border border-[#a0a0a0]" />
        <div className="ml-3 h-[6px] border-x border-[#a0a0a0]" />
        <div className="flex justify-between pl-2 leading-5">
          <span>0,</span>
          <span className="pr-1">1,</span>
        </div>
      </div>
    </div>
  </section>
);

const TabularData = () => (
  <section className="flex flex-1 flex-col">
    <PanelTitle title="Tabular Data" />
    <div className="mr-[2px] flex-1 border-t-2 border-l-2 border-[#707070] bg-[#a0a0a0]" />
  </section>
);

/* ---------- window frame, status and task bar ---------- */

const TitleBar = () => (
  <div className="flex h-[22px] shrink-0 items-center bg-linear-to-b from-[#3a5199] via-[#a79fbd] to-[#eeeef2]">
    <div className="flex h-full items-center gap-1 bg-linear-to-r from-[#a8c4ec] via-[#c3d3ee] to-transparent pr-16 pl-[1px]">
      <Glyph>
        <circle cx="8" cy="8" r="8" fill="#b00c10" />
        <path d="M3.500 12V4.500L8 9l4.500-4.500V12" fill="none" stroke="#fff" strokeWidth="2.200" />
      </Glyph>
      <h1 className="font-['Roboto',sans-serif] text-xs whitespace-nowrap text-black">A : Static Structural - Mechanical [ANSYS Multiphysics]</h1>
    </div>
    <div className="mr-[3px] ml-auto flex h-[15px] self-start overflow-hidden rounded-b border border-t-0 border-[#203a78] bg-linear-to-b from-[#7f9dd0] to-[#4a72b8]">
      <button aria-label="Minimize" className="flex w-7 items-center justify-center border-r border-[#203a78]">
        <Glyph w={11} h={7}>
          <path d="M.5 1h10L5.500 6.500z" fill="#fff" stroke="#334" strokeWidth=".7" />
        </Glyph>
      </button>
      <button aria-label="Restore" className="flex w-7 items-center justify-center border-r border-[#203a78]">
        <Glyph w={10} h={10}>
          <path d="M4 1h5v5H4zM1 4h5v5H1z" fill="#fff" stroke="#334" strokeWidth=".8" />
        </Glyph>
      </button>
      <button aria-label="Close" className="flex w-[46px] items-center justify-center">
        <Glyph w={11} h={9}>
          <path d="M1.500 1l8 7M9.500 1l-8 7" stroke="#223" strokeWidth="4" />
          <path d="M1.500 1l8 7M9.500 1l-8 7" stroke="#fff" strokeWidth="2.500" />
        </Glyph>
      </button>
    </div>
  </div>
);

const Pane = ({ children, className }: Kids & { className: string }) => (
  <div className={`flex h-[18px] items-center border-t border-l border-[#a0a0a0] border-r border-r-white pl-px whitespace-nowrap ${className}`}>
    {children}
  </div>
);

const StatusBar = () => (
  <footer className="flex h-[21px] shrink-0 items-center gap-[2px] bg-[#f0f0f0] pb-px">
    <Pane className="w-[388px]">Press F1 for Help</Pane>
    <Pane className="w-[186px]" />
    <Pane className="w-[156px] gap-1">
      <Glyph w={17} h={16}>
        <path d="M1 5h14v8H8l-3 3v-3H1z" fill="#ffe680" stroke="#a08828" />
        <text x="6" y="10" fontSize="11" fontFamily="'Noto Sans',sans-serif">0</text>
      </Glyph>
      No Messages
    </Pane>
    <Pane className="flex-1">No Selection</Pane>
    <Pane className="w-[329px] gap-3">
      <span>Metric (m, kg, N, s, V, A)</span>
      <span>Degrees</span>
      <span>rad/s</span>
      <span>Celsius</span>
    </Pane>
    <span className="ml-4 self-end">
      <Glyph w={11} h={11}>
        <path d="M0 11L11 0M4 11l7-7M8 11l3-3" stroke="#909090" />
      </Glyph>
    </span>
  </footer>
);

const appIcons: { name: string; state: "none" | "open" | "active"; art: ReactNode }[] = [
  {
    name: "Files",
    state: "none",
    art: (
      <>
        <path d="M4 4l5-2h5l2 2h5l2-1h5l2 3-1 6H3z" fill="#6e5c40" stroke="#2e2618" />
        <path d="M3 10h26l-1 20H4z" fill="#3a342a" stroke="#14110c" />
        <path d="M4 7h24v3H4z" fill="#a08a60" />
        <path d="M5 12h22v6H5z" fill="#5c5240" />
        <path d="M9 17l3-5M14 17l3-5M19 17l3-5" stroke="#c0a878" />
        <path d="M8 22h16v4H8z" fill="#181410" />
        <path d="M4 26h7v4H4zM21 26h7v4h-7z" fill="#b8a070" />
      </>
    ),
  },
  {
    name: "Media player",
    state: "none",
    art: (
      <>
        <path d="M10 4h19v22H10z" fill="#58a8d8" />
        <path d="M7 5h18v22H7z" fill="#8cc8ec" stroke="#3c88b8" />
        <path d="M4 7h17v21H4z" fill="#c4e4f6" stroke="#4c98c8" />
        <circle cx="13" cy="17" r="8" fill="#f07818" />
        <path d="M10 12l8 5-8 5z" fill="#fff" />
      </>
    ),
  },
  {
    name: "Camera",
    state: "none",
    art: (
      <>
        <path d="M2 7l8-1 2-3 9 1 1 3 8 1-2 19-26-2z" fill="#f59a20" stroke="#b86008" />
        <circle cx="17" cy="16" r="8" fill="#f4f8fc" stroke="#ccc" />
        <circle cx="17" cy="16" r="4.500" fill="#2878c0" />
        <circle cx="16" cy="15" r="1.500" fill="#a8e0ff" />
        <path d="M4 10h5v3H4z" fill="#fff4d0" />
      </>
    ),
  },
  {
    name: "Word",
    state: "open",
    art: (
      <>
        <path d="M4 1h26v27H4z" fill="#f4f8ff" stroke="#98b0d8" />
        <path d="M21 5h7M21 8h7M21 11h7M21 14h7" stroke="#88a8d8" />
        <path d="M2 3l19-1v21L2 22z" fill="#2f66b8" />
        <text x="2" y="19" fontSize="18" fontWeight="700" fill="#fff" fontFamily="'Liberation Sans',sans-serif">W</text>
        <path d="M16 20l13-3v12l-13 2z" fill="#fff" stroke="#a8c0e8" />
      </>
    ),
  },
  {
    name: "Editor",
    state: "none",
    art: (
      <>
        <path d="M0 0h32v32H0z" fill="#2c0a90" />
        <path d="M3 3l18 20M8 2l16 19M3 9l16 17M12 3l12 14" stroke="#e8e8f0" strokeWidth="1.500" />
        <path d="M20 24l5-6 6 7-4 5z" fill="#f0a830" stroke="#804c08" />
      </>
    ),
  },
  {
    name: "Opera",
    state: "open",
    art: (
      <>
        <ellipse cx="16" cy="16" rx="14.500" ry="15.500" fill="#b80c10" />
        <ellipse cx="15.500" cy="14.500" rx="12.500" ry="13" fill="#dc2428" />
        <ellipse cx="16" cy="15.500" rx="5.500" ry="12" fill="#7c94bc" />
      </>
    ),
  },
  {
    name: "Calculator",
    state: "open",
    art: (
      <>
        <path d="M6 2h21v28H6z" fill="#b4d4ee" stroke="#6090b8" />
        <path d="M8 5h17v7H8z" fill="#e8f4e8" stroke="#7898b0" />
        <path d="M8 16h18M8 20h18M8 24h18M8 28h12" stroke="#fff" strokeWidth="2.500" strokeDasharray="3 2" />
        <path d="M22 22h4v6h-4z" fill="#f09828" />
        <text x="19" y="11" fontSize="7" fontFamily="'Liberation Mono',monospace">0</text>
      </>
    ),
  },
  {
    name: "Commander",
    state: "open",
    art: (
      <>
        <path d="M2 1h27l2 2v28H2z" fill="#1838b8" stroke="#081868" />
        <path d="M8 1h16v11H8z" fill="#c0c0c8" />
        <path d="M18 2h4v8h-4z" fill="#1838b8" />
        <path d="M5 16h22v15H5z" fill="#fff" />
        <path d="M7 19h18M7 23h18M7 27h18" stroke="#d02020" />
      </>
    ),
  },
  {
    name: "Workbench",
    state: "open",
    art: (
      <>
        <circle cx="16" cy="16" r="15.500" fill="#f0c818" stroke="#9c8008" />
        <path d="M12 5h8l6 21h-5L16 10l-5 16H6z" fill="#141414" />
      </>
    ),
  },
  {
    name: "Mechanical",
    state: "active",
    art: (
      <>
        <circle cx="16" cy="16" r="15.500" fill="#c40c14" />
        <path d="M2 12a14.500 14.500 0 0 1 28 0c-8-4-20-4-28 0z" fill="#e04850" />
        <path d="M8 23V11l8 9 8-9v12" fill="none" stroke="#fff" strokeWidth="3.500" />
      </>
    ),
  },
];

const stateStyle = {
  none: "",
  open: "rounded-xs border border-[#223f6c] bg-white/15 shadow-[inset_0_0_0_1px_rgba(255,255,255,.35)]",
  active: "rounded-xs border border-[#223f6c] bg-linear-to-br from-[#e4eaf4] to-[#8ea6cc] shadow-[inset_0_0_0_1px_rgba(255,255,255,.6)]",
};

const TaskBar = () => (
  <div className="flex h-[39px] shrink-0 items-center border-t border-[#b4c8e0] bg-[linear-gradient(to_bottom,#5f83b2,#4a72a8_52%,#1c4a8a_54%,#27558f)]">
    <button aria-label="Start" className="flex w-[57px] items-center pl-2">
      <Glyph w={38} h={38}>
        <circle cx="19" cy="19" r="18" fill="#303840" stroke="#a8b4c0" strokeWidth="1.500" />
        <circle cx="19" cy="22" r="14" fill="#3c6890" opacity=".7" />
        <path d="M10 12c3-2 5-2 8 0l-2 8c-3-2-5-1-8 0z" fill="#e8602c" />
        <path d="M20 13c3 2 5 1 8 0l-2 8c-3 1-5 2-8 0z" fill="#8cc43c" />
        <path d="M8 22c3-2 5-1 8 0l-2 7c-3-2-5-1-8 0z" fill="#3ca0e0" />
        <path d="M17 23c3 2 6 1 9 0l-2 7c-3 1-6 2-9 0z" fill="#f8c828" />
      </Glyph>
    </button>
    {appIcons.map((a) => (
      <div key={a.name} className="flex w-[62px] justify-center">
        <button aria-label={a.name} className={`flex h-[38px] w-[59px] items-center justify-center ${stateStyle[a.state]}`}>
          <Glyph w={32} h={32}>{a.art}</Glyph>
        </button>
      </div>
    ))}
    <div className="ml-auto flex items-center gap-[10px] text-white">
      <span className="flex items-center gap-[6px] pb-1">
        <span>RU</span>
        <Glyph>
          <circle cx="8" cy="8" r="7.300" fill="#1420a8" stroke="#c8d0e8" />
          <text x="4.500" y="12" fontSize="12" fontWeight="700" fill="#fff" fontFamily="'Liberation Sans',sans-serif">?</text>
        </Glyph>
      </span>
      <span className="pb-2">
        <Glyph w={9} h={18}>
          <path d="M3 1.500h5v3H3zM1 4.500h5v3H1z" fill="none" stroke="#fff" />
          <path d="M2 14h5l-2.500 3z" fill="#fff" />
        </Glyph>
      </span>
      <Glyph w={8} h={5}>
        <path d="M0 5h8L4 0z" fill="#fff" />
      </Glyph>
      <Glyph w={17} h={16}>
        <path d="M2 1v14" stroke="#fff" strokeWidth="2" />
        <path d="M4 3h5l1 2h5l-2 3 1 2h-4l-1-1H4z" fill="#fff" />
      </Glyph>
      <Glyph w={16} h={16}>
        <path d="M1 5h3l4-4v14l-4-4H1z" fill="#fff" />
        <path d="M10 5c1 2 1 4 0 6M12 3c2 3 2 7 0 10" stroke="#dde" fill="none" />
      </Glyph>
      <Glyph w={16} h={16}>
        <path d="M4.500 3.500h10v9h-10z" fill="#3a5878" stroke="#fff" />
        <path d="M1 0v4h4V0M3 4v9M2 15h8" stroke="#fff" fill="none" />
        <circle cx="11" cy="11" r="4.500" fill="#2890d8" />
        <path d="M9 8c3 0 2 3 4 4l-2 3-3-3z" fill="#48c048" />
      </Glyph>
      <time className="mr-[3px] ml-1 text-center leading-[17px]">
        17:31
        <br />
        08.05.2012
      </time>
      <button aria-label="Show desktop" className="h-[38px] w-[15px] border border-[#6c90bc] bg-linear-to-b from-[#5c80ac] to-[#143868]" />
    </div>
  </div>
);

export default function App() {
  return (
    <div className="flex h-screen w-full flex-col overflow-hidden bg-[#f0f0f0] font-['Noto_Sans',sans-serif] text-[11px] leading-4 text-black">
      <TitleBar />
      <MenuBar />
      <SelectionBar />
      <EdgeBar />
      <ResultBar />
      <main className="flex min-h-0 flex-1 gap-1 pb-1">
        <aside className="flex w-[341px] shrink-0 flex-col">
          <Outline />
          <Details />
          <SectionPlanes />
        </aside>
        <div className="flex min-w-0 flex-1 flex-col">
          <div className="mr-[2px] flex min-h-0 flex-1 flex-col border-t border-l-2 border-[#707070]">
            <Viewport />
            <ViewTabs />
          </div>
          <div className="mt-[7px] flex h-[236px] shrink-0 gap-[5px]">
            <Graph />
            <TabularData />
          </div>
        </div>
      </main>
      <StatusBar />
      <TaskBar />
    </div>
  );
}
